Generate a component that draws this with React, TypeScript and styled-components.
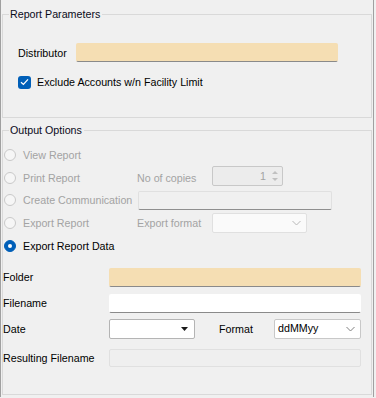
import React from 'react';
import styled, { createGlobalStyle } from 'styled-components';

const Global = createGlobalStyle`
  html, body { margin: 0; padding: 0; background: #f0f0f0; }
  body {
    font-family: "Liberation Sans", Arial, sans-serif;
    font-size: 10.7px;
    color: #000;
  }
`;

const Window = styled.div`
  width: 376px;
  height: 398px;
  display: flex;
  background: #f0f0f0;
`;

const Panel = styled.div`
  width: 374px;
  height: 397px;
  box-sizing: border-box;
  border-left: 1px solid #a0a0a0;
  border-right: 1px solid #a0a0a0;
  padding: 8px 1px 0 1px;
  display: flex;
  flex-direction: column;
  gap: 6px;
`;

const Group = styled.fieldset<{ $h: number }>`
  margin: 0;
  padding: 0;
  height: ${p => p.$h}px;
  box-sizing: border-box;
  border: 1px solid #d9d9d9;
  min-width: 0;
`;

const Legend = styled.legend`
  margin-left: 6px;
  padding: 0 2px 0 1px;
  line-height: 13px;
  color: #0a0a1a;
`;

const ParamBody = styled.div`
  padding: 22px 0 0 15px;
  display: flex;
  flex-direction: column;
  gap: 13px;
`;

const Row = styled.div<{ $h?: number }>`
  display: flex;
  align-items: center;
  height: ${p => (p.$h ? `${p.$h}px` : 'auto')};
`;

const Label = styled.span<{ $w?: number; $disabled?: boolean; $ml?: number }>`
  width: ${p => (p.$w ? `${p.$w}px` : 'auto')};
  flex: none;
  margin-left: ${p => p.$ml ?? 0}px;
  color: ${p => (p.$disabled ? '#a3a3a3' : '#000')};
  white-space: nowrap;
`;

const TextBox = styled.div<{ $w: number; $h: number; $bg?: string; $variant?: 'edit' | 'disabled' | 'combo' }>`
  width: ${p => p.$w}px;
  height: ${p => p.$h}px;
  box-sizing: border-box;
  flex: none;
  background: ${p => p.$bg ?? '#fff'};
  border: 1px solid
    ${p => (p.$variant === 'combo' ? '#c8c8c8' : p.$variant === 'disabled' ? '#e0e0e0' : 'transparent')};
  border-bottom-color: ${p =>
    p.$variant === 'combo' ? '#c8c8c8' : p.$variant === 'disabled' ? '#e0e0e0' : '#8a8a8a'};
  border-radius: 2px;
  display: flex;
  align-items: center;
  padding: 0 3px;
  color: #000;
`;

const ComboText = styled.span`
  flex: 1;
  line-height: 12px;
  margin-top: -2px;
`;

const CheckRow = styled.label`
  display: flex;
  align-items: center;
  gap: 6px;
  height: 14px;
`;

const Check = styled.span`
  width: 13px;
  height: 13px;
  border-radius: 3px;
  background: #005fb8;
  display: flex;
  align-items: center;
  justify-content: center;
`;

const OutBody = styled.div`
  padding: 6.7px 0 0 0;
  display: flex;
  flex-direction: column;
`;

const OptionGrid = styled.div`
  display: grid;
  grid-template-columns: 133px 75px 1fr;
  grid-auto-rows: 22.7px;
  align-items: center;
  padding-left: 1px;
`;

const RadioLabel = styled.span<{ $disabled?: boolean }>`
  display: flex;
  align-items: center;
  gap: 7px;
  white-space: nowrap;
  color: ${p => (p.$disabled ? '#a3a3a3' : '#000')};
`;

const RadioDot = styled.span<{ $checked?: boolean }>`
  width: 12px;
  height: 12px;
  box-sizing: border-box;
  border-radius: 50%;
  flex: none;
  border: 1px solid ${p => (p.$checked ? '#005fb8' : '#c9c9c9')};
  background: ${p => (p.$checked ? '#005fb8' : '#f6f6f6')};
  display: flex;
  align-items: center;
  justify-content: center;
  &::after {
    content: '';
    display: ${p => (p.$checked ? 'block' : 'none')};
    width: 4px;
    height: 4px;
    border-radius: 50%;
    background: #fff;
  }
`;

const Cell = styled.div<{ $span?: number; $ml?: number; $dy?: number }>`
  grid-column: ${p => (p.$span ? `span ${p.$span}` : 'auto')};
  margin-left: ${p => p.$ml ?? 0}px;
  display: flex;
  align-items: center;
  position: relative;
  top: ${p => p.$dy ?? 0}px;
`;

const Spin = styled.div`
  display: flex;
  align-items: center;
  justify-content: flex-end;
  width: 100%;
  gap: 5px;
  color: #a3a3a3;
`;

const Form = styled.div`
  margin-top: 10.8px;
  display: flex;
  flex-direction: column;
`;

const FormRow = styled(Row)<{ $mt: number }>`
  margin-top: ${p => p.$mt}px;
`;

const Chevron = ({ color }: { color: string }) => (
  <svg width="9" height="6" viewBox="0 0 9 6" style={{ flex: 'none' }}>
    <path d="M0.5 1 L4.5 5 L8.5 1" fill="none" stroke={color} strokeWidth="1" />
  </svg>
);

export default function App() {
  return (
    <>
      <Global />
      <Window>
        <Panel>
          <Group $h={110}>
            <Legend>Report Parameters</Legend>
            <ParamBody>
              <Row $h={19}>
                <Label $w={58}>Distributor</Label>
                <TextBox $w={262} $h={19} $bg="#f5deb3" />
              </Row>
              <CheckRow>
                <Check>
                  <svg width="9" height="8" viewBox="0 0 9 8">
                    <path d="M1 4.2 L3.4 6.4 L8 1.4" fill="none" stroke="#fff" strokeWidth="1.3" />
                  </svg>
                </Check>
                <span>Exclude Accounts w/n Facility Limit</span>
              </CheckRow>
            </ParamBody>
          </Group>

          <Group $h={271}>
            <Legend>Output Options</Legend>
            <OutBody>
              <OptionGrid>
                <RadioLabel $disabled>
                  <RadioDot />
                  View Report
                </RadioLabel>
                <span />
                <span />

                <RadioLabel $disabled>
                  <RadioDot />
                  Print Report
                </RadioLabel>
                <Label $disabled>No of copies</Label>
                <Cell $dy={-2}>
                  <TextBox $w={71} $h={20} $bg="#ececec" $variant="combo">
                    <Spin>
                      <span>1</span>
                      <svg width="8" height="14" viewBox="0 0 8 14">
                        <path d="M1 5 L4 2 L7 5 Z" fill="#c0c0c0" />
                        <path d="M1 9 L4 12 L7 9 Z" fill="#c0c0c0" />
                      </svg>
                    </Spin>
                  </TextBox>
                </Cell>

                <RadioLabel $disabled>
                  <RadioDot />
                  Create Communication
                </RadioLabel>
                <Cell $span={2} $ml={1}>
                  <TextBox $w={194} $h={19} $bg="#f0f0f0" $variant="disabled" style={{ borderBottomColor: '#8f8f8f' }} />
                </Cell>

                <RadioLabel $disabled>
                  <RadioDot />
                  Export Report
                </RadioLabel>
                <Label $disabled>Export format</Label>
                <Cell>
                  <TextBox $w={95} $h={20} $bg="#fafafa" $variant="disabled" style={{ justifyContent: 'flex-end', paddingRight: 5 }}>
                    <Chevron color="#b8b8b8" />
                  </TextBox>
                </Cell>

                <RadioLabel>
                  <RadioDot $checked />
                  Export Report Data
                </RadioLabel>
                <span />
                <span />
              </OptionGrid>

              <Form>
                <FormRow $mt={0} $h={19}>
                  <Label $w={106}>Folder</Label>
                  <TextBox $w={252} $h={19} $bg="#f5deb3" />
                </FormRow>
                <FormRow $mt={7} $h={19}>
                  <Label $w={106}>Filename</Label>
                  <TextBox $w={252} $h={19} />
                </FormRow>
                <FormRow $mt={6} $h={20}>
                  <Label $w={106}>Date</Label>
                  <TextBox $w={86} $h={20} $variant="combo" style={{ justifyContent: 'flex-end', paddingRight: 6, borderColor: '#b4b4b4' }}>
                    <svg width="7" height="4" viewBox="0 0 7 4">
                      <path d="M0 0 L7 0 L3.5 4 Z" fill="#1a1a1a" />
                    </svg>
                  </TextBox>
                  <Label $w={55} $ml={24}>Format</Label>
                  <TextBox $w={87} $h={20} $variant="combo" style={{ paddingRight: 5 }}>
                    <ComboText>ddMMyy</ComboText>
                    <Chevron color="#808080" />
                  </TextBox>
                </FormRow>
                <FormRow $mt={10} $h={18}>
                  <Label $w={106}>Resulting Filename</Label>
                  <TextBox $w={252} $h={18} $bg="#efefef" $variant="disabled" />
                </FormRow>
              </Form>
            </OutBody>
          </Group>
        </Panel>
      </Window>
    </>
  );
}
